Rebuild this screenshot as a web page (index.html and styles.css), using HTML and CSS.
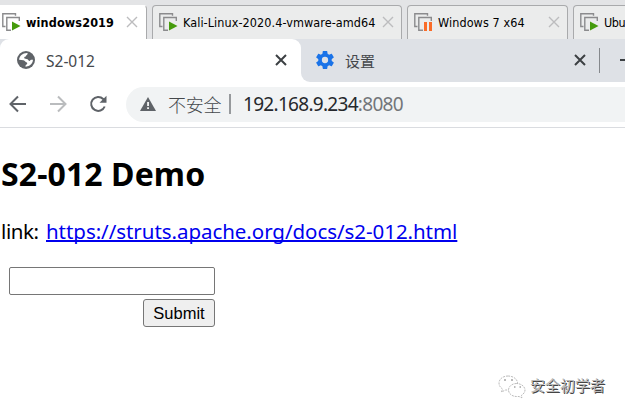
FILE: index.html
```html
<!DOCTYPE html>
<html lang="zh-CN">
<head>
<meta charset="utf-8">
<title>S2-012</title>
<link rel="stylesheet" href="styles.css">
</head>
<body>
<svg width="0" height="0" class="defs">
  <symbol id="vm" viewBox="0 0 20 20"><path d="M3.5 13.5H.8V.8h12.7v2" fill="none" stroke="#8b8b8d" stroke-width="1.4"/><path d="M9 17.2H4.8V4.5h12.5V8" fill="none" stroke="#8b8b8d" stroke-width="1.4"/></symbol>
  <symbol id="play" viewBox="0 0 20 20"><use href="#vm"/><path d="M10 8.5 18.5 13 10 17.5z" fill="#459b0c"/></symbol>
  <symbol id="pause" viewBox="0 0 20 20"><use href="#vm"/><path d="M9.5 8h9v10h-9z" fill="#ebecec"/><path d="M10 9h3v9h-3zm5 0h3v9h-3z" fill="#fa6c28"/></symbol>
  <symbol id="cross" viewBox="0 0 12 12"><path d="m1 1 10 10M11 1 1 11" fill="none" stroke="currentColor"/></symbol>
</svg>
<nav class="vmbar">
  <div class="vmtab current"><svg class="vmicon"><use href="#play"/></svg><b class="n1">windows2019</b><svg class="vmclose"><use href="#cross"/></svg></div>
  <div class="vmtab kali"><svg class="vmicon"><use href="#play"/></svg><span class="n2">Kali-Linux-2020.4-vmware-amd64</span><svg class="vmclose"><use href="#cross"/></svg></div>
  <div class="vmtab win7"><svg class="vmicon"><use href="#pause"/></svg><span class="n3">Windows 7 x64</span><svg class="vmclose"><use href="#cross"/></svg></div>
  <div class="vmtab ubuntu"><svg class="vmicon"><use href="#play"/></svg><span class="n4">Ubu</span></div>
</nav>
<header class="tabs">
  <div class="tab">
    <svg class="globe" viewBox="0 0 18 18"><circle cx="9" cy="9" r="9" fill="#5f6368"/><path d="M10.5 2C11 4 9 4 8.800 5.500 7 5.500 7 6.500 7.500 7.500L9.500 8c2 0 1.500 2 3.500 2 0-1 1-1.500 3-1.200-.2 2.700-1.600 4.700-3.500 5.800-1.500.7-3 1.200-4 1.100L8.700 14c1.500-.3 1.800-1.500 1.300-2.500C8.500 11.500 8 9.700 6.500 9.200L2.100 8.800C2.300 5 5.700 1.800 10.500 2z" fill="#fff"/></svg>
    <span class="title">S2-012</span><svg class="close"><use href="#cross"/></svg>
  </div>
  <div class="strip">
    <div class="tab2">
      <svg class="gear" viewBox="2 2 20 20"><path fill="#1a73e8" d="M19.430 12.980c.04-.32.070-.64.070-.98s-.03-.66-.07-.98l2.110-1.650c.19-.15.24-.42.12-.64l-2-3.460c-.12-.22-.39-.3-.61-.22l-2.490 1c-.52-.4-1.080-.73-1.690-.98l-.38-2.650C14.460 2.180 14.250 2 14 2h-4c-.25 0-.46.18-.49.42l-.38 2.650c-.61.25-1.170.59-1.690.98l-2.490-1c-.23-.09-.49 0-.61.22l-2 3.460c-.13.22-.07.49.12.64l2.110 1.650c-.04.32-.07.65-.07.98s.03.66.07.98l-2.110 1.650c-.19.15-.24.42-.12.64l2 3.460c.12.22.39.3.61.22l2.490-1c.52.4 1.080.73 1.690.98l.38 2.650c.03.24.24.42.49.42h4c.25 0 .46-.18.49-.42l.38-2.650c.61-.25 1.170-.59 1.690-.98l2.490 1c.23.09.49 0 .61-.22l2-3.460c.12-.22.07-.49-.12-.64zM12 15.500a3.500 3.500 0 1 1 0-7 3.500 3.500 0 0 1 0 7z"/></svg>
      <span class="settings">设置</span><svg class="close"><use href="#cross"/></svg>
    </div>
    <i class="divider"></i><i class="plus"></i>
  </div>
</header>
<div class="toolbar">
  <svg class="nav" viewBox="0 0 18 18"><path d="M17 9H2M9 1.500 1.500 9 9 16.500"/></svg>
  <svg class="nav forward" viewBox="0 0 18 18"><path d="M1 9h15M9 1.500 16.500 9 9 16.500"/></svg>
  <svg class="nav" viewBox="0 0 18 18"><path d="M15.700 11.500A7 7 0 1 1 14.200 4L16 6"/><path d="M17.500.8v7h-7z" class="tip"/></svg>
  <div class="address">
    <svg class="warn" viewBox="0 0 16 14"><path d="M8 0l8 14H0z" fill="#5f6368"/><path d="M7.200 5h1.700v4H7.200zm0 5.300h1.700V12H7.200z" fill="#fff"/></svg>
    <span class="unsafe">不安全</span><i class="bar"></i><span class="url">192.168.9.234<em>:8080</em></span>
  </div>
</div>
<main>
  <h2>S2-012 Demo</h2>
  <p><span class="label">link:</span><a href="#">https://struts.apache.org/docs/s2-012.html</a></p>
  <form><input type="text" aria-label="name"><button type="button">Submit</button></form>
</main>
<footer>
  <svg class="wechat" viewBox="0 0 28 24"><g fill="#fff" stroke="#aaa" stroke-width=".8" stroke-dasharray="2 1"><path d="M10 1C5 1 1 4 1 8c0 3 1.500 4.500 3.500 6L3.500 17l4-2h4c4.500 0 8-3 8-7S15 1 10 1z"/><path d="M18.500 8.500c-4.500 0-8 3-8 6.500s3.500 6.500 8 6.500h2.500l3 1.300-.5-2.500c2-1.300 3.500-3 3.500-5.300 0-3.500-4-6.500-8.500-6.500z"/></g><path d="M6 5h2m5 0h2m1 7h1.500m4 0H23" stroke="#777"/></svg>
  <span class="credit">安全初学者</span>
</footer>
</body>
</html>
```
FILE: styles.css
```css
* { box-sizing: border-box; }
body { margin: 0; width: 625px; height: 413px; overflow: hidden; background: #fff; color: #000; font-family: "Noto Sans", "Noto Sans CJK SC", sans-serif; display: flex; flex-direction: column; }
svg { display: block; flex: none; }
span, b { white-space: nowrap; flex: none; }
.defs { position: absolute; }
.vmbar { display: flex; flex: none; height: 39px; padding-top: 5px; gap: 5px; background: #e3e4e6; overflow: hidden; }
.vmtab { display: flex; flex: none; height: 35px; border: 1px solid #a9aaac; border-bottom: 0; border-radius: 4px 4px 0 0; background: #ebecec; padding: 0 7px 0 6px; font: 12.5px/34px "DejaVu Sans Condensed", sans-serif; }
.vmtab.current { width: 147px; background: #fff; border-left: 0; border-top-color: #fff; border-top-left-radius: 0; padding-left: 2px; }
.kali { width: 250px; }
.win7 { width: 161px; }
.ubuntu { width: 120px; }
.vmicon { width: 20px; height: 20px; margin: 7px 4px 0 0; }
.vmclose { width: 12px; height: 12px; margin: 10px 0 0 auto; color: #bcbcbe; stroke-width: 1.4px; }
.current .vmclose { margin-right: 1px; }
.n1 { letter-spacing: .15px; }
.n2 { letter-spacing: .08px; }
.n3 { letter-spacing: .1px; }
.n4 { letter-spacing: -.4px; }
.tabs { display: flex; flex: none; height: 43px; background: linear-gradient(90deg, #dee1e6 50px, #fff 50px 320px, #dee1e6 320px); overflow: hidden; }
.tab { flex: none; width: 301px; background: #fff; border-radius: 9px 0 0 0; display: flex; padding: 0 15px 0 17px; background-clip: padding-box; border-top-right-radius: 9px; box-shadow: 0 -9px 0 #dee1e6, 9px 0 0 -9px #dee1e6; }
.globe { width: 18px; height: 18px; margin: 12px 11px 0 0; }
.title { font-size: 15.5px; line-height: 44px; color: #45484c; }
.close { width: 12px; height: 12px; margin: 15px 0 0 auto; color: #3c4043; stroke-width: 2px; }
.tab .close { margin-right: -1px; }
.strip { flex: 1; display: flex; overflow: hidden; background: #dee1e6; border-radius: 0 0 0 9px; }
.tab2 { flex: none; width: 285px; display: flex; padding-left: 15px; }
.gear { width: 18px; height: 18px; margin: 12px 11px 0 0; }
.settings { font: 15px/44px "Noto Sans CJK SC", sans-serif; color: #45484c; }
.divider { flex: none; width: 1px; height: 25px; margin: 9px 0 0 13px; background: #85888c; }
.plus { flex: none; width: 12px; height: 2px; margin: 20px 0 0 20px; background: #3c4043; }
.toolbar { display: flex; flex: none; height: 46px; border-bottom: 1px solid #dadce0; padding-left: 9px; }
.nav { width: 18px; height: 18px; margin: 13px 22px 0 0; fill: none; stroke: #5f6368; stroke-width: 2; }
.nav + .nav + .nav { margin-right: 19px; }
.forward { stroke: #babcbe; }
.nav .tip { fill: #5f6368; stroke: none; }
.address { flex: 1; height: 35px; margin: 5px 0 0; border-radius: 18px 0 0 18px; background: #f1f3f4; display: flex; padding-left: 14px; }
.warn { width: 16px; height: 14px; margin: 10px 12px 0 0; }
.unsafe { width: 61px; font: 300 18px/34px "Noto Sans CJK SC", sans-serif; color: #45484c; letter-spacing: -.2px; }
.bar { width: 2px; height: 20px; margin: 7px 12px 0 0; background: #96999c; }
.url { font-size: 19px; line-height: 34px; color: #25282c; letter-spacing: -.7px; }
.url em { font-style: normal; color: #73767a; }
main { flex: none; padding-left: 1px; }
h2 { margin: 23px 0 0; font: 700 32px/46px "Noto Sans", sans-serif; letter-spacing: .1px; }
p { display: flex; margin: 18px 0 0; font-size: 20.5px; line-height: 32px; letter-spacing: -.05px; }
.label { width: 45px; letter-spacing: -.4px; }
a { color: #00e; text-decoration: underline; text-decoration-thickness: 2px; text-underline-offset: 1px; text-decoration-skip-ink: none; white-space: nowrap; }
form { width: 206px; margin: 20px 0 0 8px; display: flex; flex-direction: column; align-items: flex-end; gap: 4px; }
input { width: 206px; height: 28px; border: 1px solid #767676; border-radius: 2px; background: #fff; padding: 0; margin: 0; }
button { width: 72px; height: 28px; border: 1px solid #767676; border-radius: 3px; background: #efefef; color: #000; padding: 0; font: 16.5px/24px "Liberation Sans", sans-serif; }
footer { display: flex; flex: none; margin: 48px 0 0 498px; height: 26px; }
.wechat { width: 28px; height: 24px; }
.credit { margin-left: 4px; font: 15px/20px "Noto Sans CJK SC", sans-serif; color: #bbb; text-shadow: 1px 1px 0 #444; }
```
